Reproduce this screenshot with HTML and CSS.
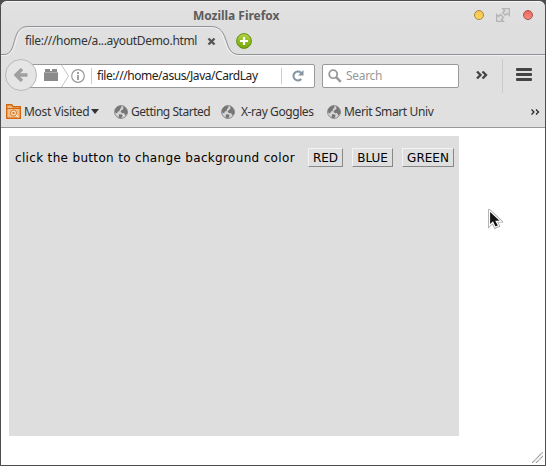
FILE: index.html
```html
<!DOCTYPE html>
<html lang="en">
<head>
<meta charset="utf-8">
<title>Mozilla Firefox</title>
<link rel="stylesheet" href="styles.css">
</head>
<body>
<svg class="defs" width="0" height="0">
  <symbol id="globe" viewBox="0 0 14 14">
    <circle cx="7" cy="7" r="6.400" fill="#d6d6d6" stroke="#858585"/>
    <path d="M1 4.500L3.500 1.500 7 .8 7.500 2.500 6 4 5.500 6 4 6.500 3 8.500 1.200 7.500zM9 1.200l2.500 1.300 1.700 3 .2 3-2 2-1.400-2.500-2 .2L6.500 6.500 8 4.800 9.500 4zM5 9.200l3 .3.5 1.500-1.500 2.300-2.500-.8z" fill="#767676"/>
  </symbol>
</svg>
<div class="window">
  <header class="titlebar">
    <h1 class="title"><span>Mozilla Firefox</span></h1>
    <div class="controls">
      <i class="dot yellow"></i>
      <svg class="expand" width="14" height="14" viewBox="0 0 14 14"><path d="M6.500.500h7v7l-2.200-2.200-2 2-2.600-2.600 2-2zM.5 6.500l2 2L4.500 6.500l3 3-2 2 2 2h-7z" fill="#dcdcdc" stroke="#b4b4b4" stroke-width="1.300"/></svg>
      <i class="dot red"></i>
    </div>
  </header>
  <div class="tabs">
    <svg class="tab-shape" width="544" height="30" viewBox="1 26 544 30" fill="none">
      <path d="M1 54.500H4C18 54.500 10 26.500 28 26.500H211C231 26.500 222 54.500 239 54.500H545V56H1z" fill="#e0e0e0"/>
      <path d="M1 55.500H4C20 55.500 12 27.500 28 27.500H211C229 27.500 220 55.500 239 55.500H545" stroke="#f0f0f0"/>
      <path d="M1 54.500H4C18 54.500 10 26.500 28 26.500H211C231 26.500 222 54.500 239 54.500H545" stroke="#8f9399"/>
    </svg>
    <span class="tab-label">file:///home/a...ayoutDemo.html</span>
    <svg class="close" width="9" height="9" viewBox="0 0 9 9"><path d="M1.500 1.500l6 6M7.500 1.500l-6 6" stroke="#555" stroke-width="2.400"/></svg>
    <svg class="plus" width="16" height="16" viewBox="0 0 16 16">
      <defs><linearGradient id="lime" x2="0" y2="1"><stop stop-color="#b5d44c"/><stop offset=".5" stop-color="#91bd20"/><stop offset="1" stop-color="#75a50b"/></linearGradient></defs>
      <circle cx="8" cy="8" r="7.400" fill="url(#lime)" stroke="#668e10"/><path d="M8 4v8M4 8h8" stroke="#fff" stroke-width="2.200"/></svg>
  </div>
  <nav class="navbar">
    <div class="back"><svg width="14" height="14" viewBox="0 0 14 14"><path d="M13.500 7H3M8 1L2 7l6 6" fill="none" stroke="#a0a0a0" stroke-width="3.400"/></svg></div>
    <div class="address">
      <svg class="identity" width="46" height="22" viewBox="0 0 46 22">
        <path d="M5 4h5v2h2V4h5v3h1v9H4V7h1z" fill="#8b8b8b"/><path d="M4 7.500h14" stroke="#aaa"/><path d="M21.500 0l7 11-7 11" fill="none" stroke="#c4c4c4"/>
        <circle cx="38" cy="11" r="6.300" fill="none" stroke="#999" stroke-width="1.200"/><path d="M38 7v2M38 10v5" stroke="#8a8a8a" stroke-width="1.600"/>
      </svg>
      <span class="url">file:///home/asus/Java/CardLay</span>
      <span class="reload"><svg width="12" height="12" viewBox="0 0 12 12"><path d="M9.300 9A4.500 4.500 0 1 1 9 2.700" fill="none" stroke="#8493a0" stroke-width="2"/><path d="M11.500 0v5.500H6z" fill="#8493a0"/></svg></span>
    </div>
    <div class="search">
      <svg width="14" height="14" viewBox="0 0 14 14" fill="none" stroke="#999"><circle cx="5.200" cy="5.200" r="4" stroke-width="1.800"/><path d="M8.200 8.200l4.600 4.600" stroke-width="2.500"/></svg>
      <span>Search</span>
    </div>
    <svg class="more" width="12" height="8" viewBox="0 0 12 8"><path d="M1 .5L4.500 4 1 7.500M6.500.5L10 4 6.500 7.500" fill="none" stroke="#444" stroke-width="2.300"/></svg>
    <i class="divider"></i>
    <div class="burger"><i></i><i></i><i></i></div>
  </nav>
  <div class="bookmarks">
    <a class="mark visited"><svg width="15" height="15" viewBox="0 0 15 15"><path d="M.7.700h5l1.300 2h7.300v11.600H.7z" fill="#f0c08a" stroke="#d4660d" stroke-width="1.400"/><path d="M1 4.500h13" stroke="#d4660d"/><circle cx="7.500" cy="9" r="3" fill="#fae5cb" stroke="#d97925"/><circle cx="7.500" cy="9" r="1.200" fill="#d97925"/><path d="M10 11l2.500 2.500" stroke="#fff"/></svg><span class="w1">Most Visited</span><i class="caret"></i></a>
    <a class="mark getting"><svg width="14" height="14"><use href="#globe"/></svg><span class="w2">Getting Started</span></a>
    <a class="mark xray"><svg width="14" height="14"><use href="#globe"/></svg><span class="w3">X-ray Goggles</span></a>
    <a class="mark merit"><svg width="14" height="14"><use href="#globe"/></svg><span class="w4">Merit Smart Univ</span></a>
    <svg class="overflow" width="9" height="6" viewBox="0 0 9 6"><path d="M.5.500L3 3 .5 5.500M5 .5L7.500 3 5 5.500" fill="none" stroke="#222" stroke-width="1.200"/></svg>
  </div>
  <main class="page">
    <div class="applet">
      <span class="prompt">click the button to change background color</span>
      <button class="b-red">RED</button><button class="b-blue">BLUE</button><button class="b-green">GREEN</button>
    </div>
    <svg class="grip" width="11" height="11" viewBox="0 0 11 11"><path d="M0 11L11 0M4 11l7-7" stroke="#999" stroke-width="1.200" stroke-dasharray="1.400 .3"/></svg>
  </main>
  <svg class="cursor" width="15" height="21" viewBox="0 0 15 21"><path d="M1.500 1.500v15l3.300-3.200 2.300 5 3.500-1.500-2.400-4.500h4.800z" fill="#151515" stroke="#999" stroke-width="2.600"/><path d="M1.500 1.500v15l3.300-3.200 2.300 5 3.500-1.500-2.400-4.500h4.800z" fill="#151515" stroke="#fff" stroke-width="1.200"/></svg>
</div>
</body>
</html>
```
FILE: styles.css
```css
* { box-sizing: border-box; }
body { margin: 0; background: #4e4e50; font: 12px/16px "Noto Sans", sans-serif; color: #333; }
svg { display: block; flex: none; }
span { white-space: nowrap; }
.defs { position: absolute; }
.window { position: relative; width: 546px; height: 466px; border: 1px solid #4e4e50; border-radius: 7px 7px 0 0; background: #dfdfdf; overflow: hidden; display: flex; flex-direction: column; }
.titlebar { height: 25px; flex: none; display: flex; justify-content: space-between; padding: 6px 12px 0 192px; border-top: 1px solid #f7f7f7; border-radius: 6px 6px 0 0; background: linear-gradient(#e2e2e2, #dedede); }
.title { margin: 0; font: bold 12px/16px "Noto Sans", sans-serif; color: #5c5c5c; letter-spacing: -.04px; }
.controls { display: flex; align-items: flex-start; }
.dot { width: 10px; height: 10px; border-radius: 50%; margin-top: 2px; }
.yellow { background: linear-gradient(#f6c451, #ffd45a); border: 1px solid #a9853a; }
.red { background: linear-gradient(#e9685d, #f48b80); border: 1px solid #ad4c46; }
.expand { margin: 0 13px 0 12px; }
.tabs { position: relative; height: 30px; flex: none; display: flex; padding-left: 24px; background: #dedede; }
.tab-shape { position: absolute; left: 0; top: 0; }
.tab-label { position: relative; width: 172px; margin-top: 7px; letter-spacing: -.33px; }
.close { position: relative; margin: 11px 0 0 10px; }
.plus { position: relative; margin: 7px 0 0 20px; }
.navbar { height: 39px; flex: none; display: flex; align-items: center; padding: 0 13px 0 4px; background: #e0e0e0; }
.back { position: relative; z-index: 1; width: 32px; height: 32px; margin-bottom: 2px; border: 1px solid #b9b9b9; border-radius: 50%; background: #e5e5e5; display: flex; align-items: center; justify-content: center; flex: none; }
.address { width: 289px; height: 24px; margin-left: -11px; padding-left: 13px; border: 1px solid #999; border-radius: 2px; background: #fff; display: flex; align-items: center; flex: none; }
.url { width: 172px; margin-left: 5px; padding-left: 5px; border-left: 1px solid #ccc; color: #222; letter-spacing: -.44px; }
.reload { width: 33px; height: 16px; margin-left: 18px; padding: 2px 0 0 10px; border-left: 1px solid #ccc; }
.search { width: 137px; height: 24px; margin-left: 7px; padding-left: 5px; border: 1px solid #999; border-radius: 2px; background: #fff; display: flex; align-items: center; gap: 4px; color: #999; letter-spacing: -.3px; flex: none; }
.more { margin: 0 0 2px 17px; }
.divider { width: 1px; height: 34px; margin-left: 14px; background: #c9c9c9; }
.burger { width: 16px; margin: 0 0 2px 13px; display: flex; flex-direction: column; gap: 2px; }
.burger i { height: 3px; border-radius: 1px; background: #444; }
.bookmarks { height: 33px; flex: none; display: flex; align-items: center; padding: 1px 5px 0 5px; border-bottom: 1px solid #999; background: #e0e0e0; }
.mark { display: flex; align-items: center; gap: 3px; flex: none; }
.mark span { padding-top: 1px; }
.visited { width: 108px; }
.getting { width: 107px; }
.xray { width: 106px; gap: 6px; }
.merit { width: 110px; }
.w1 { letter-spacing: -.3px; width: 64px; }
.w2 { letter-spacing: -.47px; }
.w3 { letter-spacing: -.42px; }
.w4 { letter-spacing: -.38px; }
.caret { border: 4px solid transparent; border-top: 5px solid #333; border-bottom: 0; }
.overflow { margin-left: auto; }
.page { position: relative; flex: 1; padding: 8px; background: #fff; }
.applet { width: 450px; height: 300px; padding: 12px 5px 0 6px; display: flex; align-items: flex-start; background: #dedede; color: #000; font: 12px/15px "DejaVu Sans", sans-serif; }
.prompt { width: 293px; margin-top: 3px; letter-spacing: .33px; }
button { height: 19px; padding: 1px 0 0; border: 1px solid #f3f3f3; border-right-color: #888; border-bottom-color: #888; background: #dfdfdf; color: #000; font: 12px/15px "DejaVu Sans", sans-serif; }
.b-red { width: 35px; margin-right: 9px; }
.b-blue { width: 41px; margin-right: 9px; }
.b-green { width: 52px; }
.grip { position: absolute; right: 2px; bottom: 2px; }
.cursor { position: absolute; left: 487px; top: 208px; }
```
